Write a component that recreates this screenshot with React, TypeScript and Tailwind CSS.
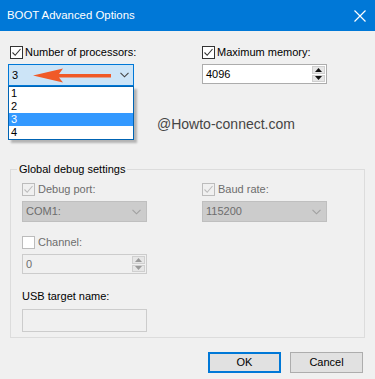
import React from "react";

const font = { fontFamily: '"Liberation Sans", Arial, sans-serif' };

function Check({ checked, disabled, dimFill }: { checked?: boolean; disabled?: boolean; dimFill?: boolean }) {
  const border = disabled ? "border-[#bcbcbc]" : "border-[#333333]";
  const bg = dimFill ? "bg-[#f0f0f0]" : "bg-white";
  return (
    <div className={`w-[13px] h-[13px] border ${border} ${bg} flex items-center justify-center shrink-0`}>
      {checked && (
        <svg width="11" height="11" viewBox="0 0 11 11">
          <path d="M1.5 5.5 L4.2 8.3 L9.5 2" fill="none" stroke={disabled ? "#bcbcbc" : "#333"} strokeWidth="1.1" />
        </svg>
      )}
    </div>
  );
}

function Chevron({ color }: { color: string }) {
  return (
    <svg width="9" height="6" viewBox="0 0 9 6" className="shrink-0">
      <path d="M0.5 0.8 L4.5 4.8 L8.5 0.8" fill="none" stroke={color} strokeWidth="1.1" />
    </svg>
  );
}

function Spin({ disabled }: { disabled?: boolean }) {
  const c = disabled ? "#9a9a9a" : "#111";
  return (
    <div className="flex flex-col w-[14px] h-full py-[1px] pr-[1px] gap-[1px] shrink-0">
      <div className="flex-1 bg-[#e6e6e6] border border-[#cfcfcf] flex items-center justify-center">
        <svg width="7" height="4" viewBox="0 0 7 4"><path d="M0 4 L3.5 0 L7 4 Z" fill={c} /></svg>
      </div>
      <div className="flex-1 bg-[#e6e6e6] border border-[#cfcfcf] flex items-center justify-center">
        <svg width="7" height="4" viewBox="0 0 7 4"><path d="M0 0 L3.5 4 L7 0 Z" fill={c} /></svg>
      </div>
    </div>
  );
}

export default function App() {
  return (
    <div className="w-[375px] h-[379px] bg-[#f0f0f0] text-[11px] text-[#000] overflow-hidden" style={font}>
      {/* Title bar */}
      <div className="h-[31px] bg-[#0078d7] flex items-center justify-between pl-[7px] pr-[9px]">
        <span className="text-white text-[11.4px] whitespace-nowrap">BOOT Advanced Options</span>
        <svg width="12" height="12" viewBox="0 0 12 12">
          <path d="M0.5 0.5 L11.5 11.5 M11.5 0.5 L0.5 11.5" stroke="#fff" strokeWidth="1.2" />
        </svg>
      </div>

      {/* Top row */}
      <div className="flex pt-[15px] pl-[8px] gap-[68px]">
        <div className="w-[126px] relative shrink-0">
          <div className="flex items-center gap-[2px] pl-[2px] h-[13px]">
            <Check checked />
            <span className="leading-[13px] whitespace-nowrap">Number of processors:</span>
          </div>
          <div className="relative mt-[5px] h-[22px] bg-[#cce4f7] border border-[#0078d7] flex items-center justify-between pl-[3px] pr-[4px]">
            <span>3</span>
            <Chevron color="#444" />
            <svg width="78" height="15" viewBox="0 0 78 15" className="absolute left-[24px] top-[3px]">
              <path d="M0 7.5 L30 0.5 L26 6 L78 6 L78 9.5 L26 9.5 L30 14.5 Z" fill="#f05a28" />
            </svg>
          </div>
          {/* Dropdown list overlay */}
          <div className="absolute left-0 top-[40px] w-[126px] bg-white border border-[#0064b4] shadow-[3px_3px_2px_rgba(0,0,0,0.25)] z-10">
            <div className="h-[13px] leading-[13px] pl-[2px]">1</div>
            <div className="h-[13px] leading-[13px] pl-[2px]">2</div>
            <div className="h-[13px] leading-[13px] pl-[2px] bg-[#3399ff] text-white">3</div>
            <div className="h-[13px] leading-[13px] pl-[2px]">4</div>
          </div>
        </div>
        <div className="w-[125px] shrink-0">
          <div className="flex items-center gap-[2px] h-[13px]">
            <Check checked />
            <span className="leading-[13px] whitespace-nowrap">Maximum memory:</span>
          </div>
          <div className="mt-[5px] h-[20px] bg-white border border-[#acacac] flex items-center justify-between pl-[3px]">
            <span>4096</span>
            <Spin />
          </div>
        </div>
      </div>

      {/* Watermark */}
      <div className="mt-[30px] ml-[157px] h-[16px] text-[14px] leading-[16px] text-[#454545] whitespace-nowrap">
        @Howto-connect.com
      </div>

      {/* Group box */}
      <fieldset className="ml-[10px] mt-[30px] w-[355px] h-[176px] border border-[#dcdcdc] px-[11px] pb-0 pt-0">
        <legend className="px-[2px] ml-[-5px] leading-[14px] whitespace-nowrap">Global debug settings</legend>
        <div className="flex gap-[55px] mt-[7px]">
          <div className="w-[125px] shrink-0">
            <div className="flex items-center gap-[3px] h-[13px]">
              <Check checked disabled dimFill />
              <span className="text-[#6d6d6d] leading-[13px] whitespace-nowrap">Debug port:</span>
            </div>
            <div className="mt-[5px] h-[21px] bg-[#cccccc] border border-[#bfbfbf] flex items-center justify-between pl-[3px] pr-[5px]">
              <span className="text-[#6d6d6d]">COM1:</span>
              <Chevron color="#a0a0a0" />
            </div>
          </div>
          <div className="w-[125px] shrink-0">
            <div className="flex items-center gap-[3px] h-[13px]">
              <Check checked disabled dimFill />
              <span className="text-[#6d6d6d] leading-[13px] whitespace-nowrap">Baud rate:</span>
            </div>
            <div className="mt-[5px] h-[21px] bg-[#cccccc] border border-[#bfbfbf] flex items-center justify-between pl-[3px] pr-[5px]">
              <span className="text-[#6d6d6d]">115200</span>
              <Chevron color="#a0a0a0" />
            </div>
          </div>
        </div>
        <div className="w-[125px] mt-[14px]">
          <div className="flex items-center gap-[3px] h-[13px]">
            <Check disabled />
            <span className="text-[#6d6d6d] leading-[13px] whitespace-nowrap">Channel:</span>
          </div>
          <div className="mt-[5px] h-[20px] bg-[#f0f0f0] border border-[#cccccc] flex items-center justify-between pl-[3px]">
            <span className="text-[#6d6d6d]">0</span>
            <Spin disabled />
          </div>
        </div>
        <div className="mt-[16px] leading-[13px] whitespace-nowrap">USB target name:</div>
        <div className="mt-[6px] w-[125px] h-[23px] bg-[#f0f0f0] border border-[#cccccc]"></div>
      </fieldset>

      {/* Buttons */}
      <div className="flex justify-end gap-[9px] pr-[12px] mt-[14px]">
        <button className="w-[73px] h-[21px] bg-[#e1e1e1] border-2 border-[#0078d7] text-[11px] leading-[15px]">OK</button>
        <button className="w-[73px] h-[21px] bg-[#e1e1e1] border border-[#adadad] text-[11px] leading-[17px]">Cancel</button>
      </div>
    </div>
  );
}
